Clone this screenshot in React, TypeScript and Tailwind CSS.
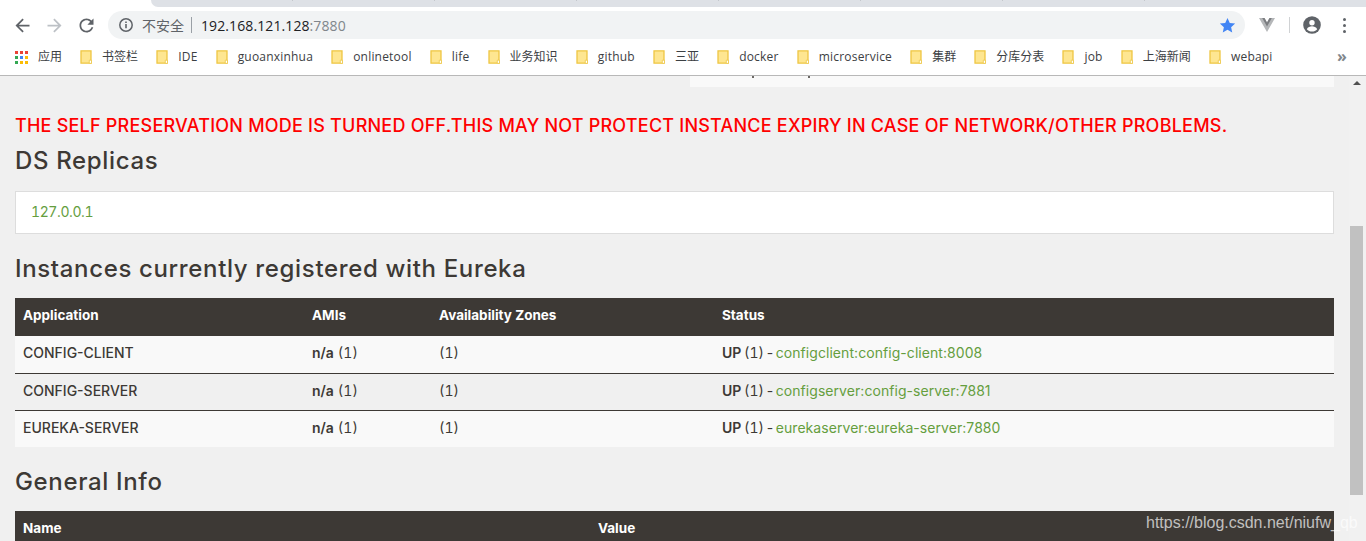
import type { ReactNode } from "react";

const bookmarks = [
  "书签栏",
  "IDE",
  "guoanxinhua",
  "onlinetool",
  "life",
  "业务知识",
  "github",
  "三亚",
  "docker",
  "microservice",
  "集群",
  "分库分表",
  "job",
  "上海新闻",
  "webapi",
];

const instances = [
  { app: "CONFIG-CLIENT", link: "configclient:config-client:8008", bg: "bg-[#f9f9f9]" },
  { app: "CONFIG-SERVER", link: "configserver:config-server:7881", bg: "bg-[#f0f0f0]" },
  { app: "EUREKA-SERVER", link: "eurekaserver:eureka-server:7880", bg: "bg-[#f9f9f9]" },
];

const chromeFont = "font-['Open_Sans','Noto_Sans_CJK_SC',sans-serif]";

function NavIcon({ d, className }: { d: string; className: string }) {
  return (
    <svg width="21" height="21" viewBox="0 0 24 24" className={`shrink-0 ${className}`}>
      <path d={d} fill="currentColor" />
    </svg>
  );
}

function FolderIcon() {
  return (
    <svg width="12" height="14" viewBox="0 0 12 14" className="shrink-0">
      <path d="M1 .8h10v12.4H1z" fill="#fee691" stroke="#eec643" strokeWidth="1.3" />
      <path d="M9.3 10.2h2.2v3.2H9.3z" fill="#fff" stroke="#eec643" strokeWidth="0.8" />
    </svg>
  );
}

function AppsIcon() {
  const colors = ["#ea4335", "#ea4335", "#ea4335", "#34a853", "#4285f4", "#fbbc05", "#34a853", "#fbbc05", "#fbbc05"];
  return (
    <div className="grid shrink-0 grid-cols-3 gap-[2px]">
      {colors.map((c, i) => (
        <div key={i} className="h-[3px] w-[3px]" style={{ backgroundColor: c }} />
      ))}
    </div>
  );
}

function TabStrip() {
  return (
    <div className="flex h-[7px] bg-white">
      <div className="ml-[151px] flex flex-1 rounded-bl-[7px] bg-[#dee1e6]">
        {[0, 1, 2, 3, 4, 5, 6].map((i) => (
          <div key={i} className="h-[1px] w-[142px] border-r border-[#c4c7cc]" />
        ))}
      </div>
    </div>
  );
}

function Toolbar() {
  return (
    <div className="flex h-[32px] items-center bg-white pt-[4px]">
      <NavIcon
        className="ml-[12px] text-[#5f6368]"
        d="M20 11H7.83l5.59-5.59L12 4l-8 8 8 8 1.41-1.41L7.83 13H20v-2z"
      />
      <NavIcon
        className="ml-[11px] text-[#bdc1c6]"
        d="M12 4l-1.41 1.41L16.17 11H4v2h12.17l-5.58 5.59L12 20l8-8z"
      />
      <NavIcon
        className="ml-[11px] text-[#5f6368]"
        d="M17.65 6.35C16.2 4.9 14.21 4 12 4c-4.42 0-7.99 3.58-7.99 8s3.57 8 7.99 8c3.73 0 6.84-2.55 7.73-6h-2.08c-.82 2.33-3.04 4-5.65 4-3.31 0-6-2.69-6-6s2.69-6 6-6c1.66 0 3.14.69 4.22 1.78L13 11h7V4l-2.35 2.35z"
      />
      {/* address bar */}
      <div className="ml-[11px] flex h-[28px] w-[1137px] items-center rounded-full bg-[#f1f3f4] pl-[10px] pr-[9px]">
        <svg width="16" height="16" viewBox="0 0 16 16" className="shrink-0 text-[#5f6368]">
          <circle cx="8" cy="8" r="6.2" fill="none" stroke="currentColor" strokeWidth="1.5" />
          <path d="M7.2 7h1.6v4.2H7.2zM7.2 4.5h1.6v1.6H7.2z" fill="currentColor" />
        </svg>
        <span className={`ml-[8px] text-[14px] text-[#5f6368] ${chromeFont}`}>不安全</span>
        <div className="ml-[7px] h-[16px] w-px bg-[#9aa0a6]" />
        <span className={`ml-[9px] text-[14px] tracking-[0.1px] text-[#202124] ${chromeFont}`}>
          192.168.121.128<span className="text-[#80868b]">:7880</span>
        </span>
        <svg width="17" height="17" viewBox="0 0 24 24" className="ml-auto shrink-0">
          <path d="M12 1.5l3.2 7 7.6.8-5.7 5.1 1.6 7.6-6.7-3.9-6.7 3.9 1.6-7.6-5.7-5.1 7.6-.8z" fill="#4285f4" />
        </svg>
      </div>
      <svg width="16" height="14" viewBox="0 0 16 14" className="ml-[14px] shrink-0">
        <path d="M0 0h5.5L8 4.5 10.5 0H16L8 14z" fill="#b5b7b9" />
        <path d="M3.2 0h2.3L8 4.5 10.5 0h2.3L8 8.5z" fill="#7b7d80" />
      </svg>
      <div className="ml-[14px] h-[16px] w-px bg-[#d0d2d4]" />
      <svg width="18" height="18" viewBox="0 0 18 18" className="ml-[13px] shrink-0">
        <circle cx="9" cy="9" r="8.8" fill="#5f6368" />
        <circle cx="9" cy="6.7" r="2.7" fill="#fff" />
        <path d="M3.8 13.2c1-2 3.2-2.9 5.2-2.9s4.2.9 5.2 2.9c-1.3 1.5-3.1 2.3-5.2 2.3s-3.9-.8-5.2-2.3z" fill="#fff" />
      </svg>
      <div className="ml-[22px] flex flex-col gap-[3px]">
        <div className="h-[3px] w-[3px] rounded-full bg-[#5f6368]" />
        <div className="h-[3px] w-[3px] rounded-full bg-[#5f6368]" />
        <div className="h-[3px] w-[3px] rounded-full bg-[#5f6368]" />
      </div>
    </div>
  );
}

function BookmarkBar() {
  return (
    <div className={`relative flex h-[37px] items-center border-b border-[#b8b8b8] bg-white pl-[15px] text-[12px] text-[#3c4043] ${chromeFont}`}>
      <AppsIcon />
      <span className="ml-[10px] mr-[18px]">应用</span>
      {bookmarks.map((b) => (
        <div key={b} className="mr-[18.15px] flex items-center gap-[10px]">
          <FolderIcon />
          <span className={/^[a-zA-Z]+$/.test(b) ? "tracking-[0.2px]" : ""}>{b}</span>
        </div>
      ))}
      <span className="absolute left-[1337px] top-[9px] text-[16px] leading-none font-bold text-[#80868b]">»</span>
    </div>
  );
}

function TH({ children, w }: { children?: ReactNode; w?: string }) {
  return <th className={`${w ?? ""} px-2 pb-[3px] text-left text-[13.5px] font-bold`}>{children}</th>;
}

export default function App() {
  return (
    <div className="relative h-[541px] w-[1366px] overflow-hidden bg-[#f0f0f0]">
      <TabStrip />
      <Toolbar />
      <BookmarkBar />

      {/* page */}
      <div className="font-['Inter',sans-serif] text-[14px] text-[#3d3935]">
        <div className="flex h-[11px] justify-end pr-[32px]">
          {/* bottom edge of the panel scrolled away under the bookmarks */}
          <div className="flex w-[644px] items-start gap-[54px] bg-[#f9f9f9] pl-[62px]">
            <div className="h-[2px] w-[2px] bg-[#6b6865]" />
            <div className="h-[2px] w-[2px] bg-[#6b6865]" />
          </div>
        </div>
        <div className="pl-[15px] pr-[32px]">
          <h3 className="mt-[27px] text-[18px] leading-[24px] font-medium tracking-[0.22px] text-[#ff0000]">
            THE SELF PRESERVATION MODE IS TURNED OFF.THIS MAY NOT PROTECT INSTANCE EXPIRY IN CASE OF NETWORK/OTHER PROBLEMS.
          </h3>
          <h2 className="mt-[8px] text-[24px] leading-[30px] font-medium tracking-[0.65px]">DS Replicas</h2>
          <div className="mt-[15px] flex h-[43px] items-center border border-[#dddddd] bg-white pb-[3px] pl-[15px]">
            <a className="tracking-[-0.4px] text-[#659e3e] tabular-nums">127.0.0.1</a>
          </div>
          <h2 className="mt-[20px] text-[24px] leading-[30px] font-medium tracking-[0.65px]">
            Instances currently registered with Eureka
          </h2>
          <table className="mt-[14px] w-full table-fixed border-collapse">
            <thead>
              <tr className="h-[38px] bg-[#3d3935] text-white">
                <TH w="w-[289px]">Application</TH>
                <TH w="w-[127px]">AMIs</TH>
                <TH w="w-[283px]">Availability Zones</TH>
                <TH>Status</TH>
              </tr>
            </thead>
            <tbody>
              {instances.map((r, i) => (
                <tr key={r.app} className={`h-[37px] ${r.bg} ${i < 2 ? "border-b border-[#3d3935]" : ""}`}>
                  <td className="px-2 pb-[3px] font-medium">{r.app}</td>
                  <td className="px-2 pb-[3px]">
                    <b className="font-semibold">n/a</b> <span className="tabular-nums">(1)</span>
                  </td>
                  <td className="px-2 pb-[3px] tabular-nums">(1)</td>
                  <td className="px-2 pb-[3px] [word-spacing:-1.3px]">
                    <b className="font-semibold">UP</b> <span className="tabular-nums">(1)</span> -{" "}
                    <a className="tracking-[0.06px] text-[#659e3e]">{r.link}</a>
                  </td>
                </tr>
              ))}
            </tbody>
          </table>
          <h2 className="mt-[20px] text-[24px] leading-[30px] font-medium tracking-[0.65px]">General Info</h2>
          <table className="mt-[14px] w-full table-fixed">
            <thead>
              <tr className="h-[38px] bg-[#3d3935] text-white">
                <TH w="w-[575px]">Name</TH>
                <TH>Value</TH>
              </tr>
            </thead>
          </table>
        </div>
      </div>

      {/* scrollbar */}
      <div className="absolute right-0 top-[76px] bottom-0 w-[17px] bg-[#f1f1f1]">
        <div className="absolute left-[4px] top-[5px] h-0 w-0 border-x-[4px] border-b-[4px] border-x-transparent border-b-[#505050]" />
        <div className="absolute left-[1px] top-[150px] h-[269px] w-[13px] bg-[#c1c1c1]" />
      </div>

      {/* watermark */}
      <span className="absolute left-[1146px] top-[511px] font-['Liberation_Sans',sans-serif] text-[16px] text-[#ffffffb0]">
        https://blog.csdn.net/niufw_qb
      </span>
    </div>
  );
}
